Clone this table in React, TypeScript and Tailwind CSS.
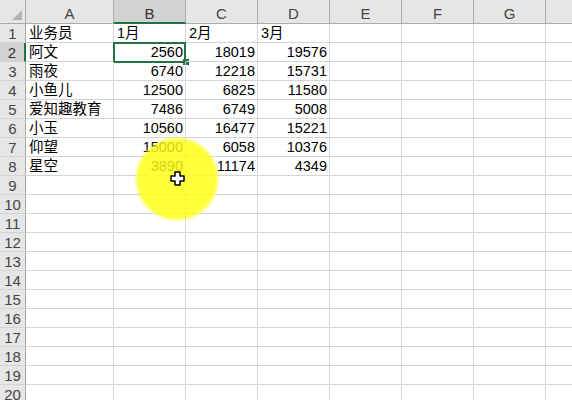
import React from "react"

const COLS = ["A", "B", "C", "D", "E", "F", "G", ""]
const WIDTHS = ["w-[88px]", "w-[72px]", "w-[72px]", "w-[72px]", "w-[72px]", "w-[72px]", "w-[72px]", "w-[72px]"]

type Row = [string, string, string, string] | null

const DATA: Row[] = [
  ["业务员", "1月", "2月", "3月"],
  ["阿文", "2560", "18019", "19576"],
  ["雨夜", "6740", "12218", "15731"],
  ["小鱼儿", "12500", "6825", "11580"],
  ["爱知趣教育", "7486", "6749", "5008"],
  ["小玉", "10560", "16477", "15221"],
  ["仰望", "15000", "6058", "10376"],
  ["星空", "3890", "11174", "4349"],
]

function Cell({ ci, ri, value }: { ci: number; ri: number; value?: string }) {
  const isNum = ri > 0 && ci > 0
  const selected = ri === 1 && ci === 1
  return (
    <div
      className={`relative h-[19px] shrink-0 border-r border-b border-[#d4d4d4] ${WIDTHS[ci]} ${isNum ? "text-right pr-[2px]" : "text-left pl-[3px]"} leading-[19px] text-[14.5px] text-black whitespace-nowrap`}
    >
      {value}
      {selected && (
        <>
          <div className="absolute -left-[1px] -top-[1px] h-[21px] w-[73px] border-2 border-[#217346]" />
          <div className="absolute -right-[4px] -bottom-[4px] h-[6px] w-[6px] bg-[#217346]" />
        </>
      )}
    </div>
  )
}

export default function App() {
  const rows = Array.from({ length: 20 }, (_, i) => i)
  return (
    <div className="relative h-[400px] w-[572px] overflow-hidden bg-white font-['Liberation_Sans','Noto_Sans_CJK_SC',sans-serif]">
      {/* column headers */}
      <div className="flex h-[24px]">
        <div className="relative h-[24px] w-[26px] shrink-0 border-r border-b border-[#ababab] bg-[#e6e6e6]">
          <svg className="absolute right-[3px] bottom-[3px]" width="10" height="10" viewBox="0 0 10 10">
            <polygon points="10,0 10,10 0,10" fill="#b4b4b4" />
          </svg>
        </div>
        {COLS.map((c, ci) => (
          <div
            key={ci}
            className={`h-[24px] shrink-0 ${WIDTHS[ci]} border-r pt-[4px] text-center text-[15px] leading-[19px] ${ci === 1 ? "border-b-2 border-b-[#217346] border-r-[#ababab] bg-[#d2d2d2] text-[#333]" : "border-b border-[#ababab] bg-[#e6e6e6] text-[#444]"}`}
          >
            {c}
          </div>
        ))}
      </div>

      {rows.map((ri) => {
        const row = DATA[ri] ?? null
        return (
          <div key={ri} className="flex h-[19px]">
            <div
              className={`h-[19px] w-[26px] shrink-0 border-b border-[#d4d4d4] text-center text-[15px] leading-[19px] ${ri === 1 ? "border-r-2 border-r-[#217346] bg-[#d2d2d2] text-[#333]" : "border-r border-r-[#ababab] bg-[#e6e6e6] text-[#444]"}`}
            >
              {ri + 1}
            </div>
            {COLS.map((c, ci) => (
              <Cell key={ci} ci={ci} ri={ri} value={row && ci < 4 ? row[ci] : undefined} />
            ))}
          </div>
        )
      })}

      {/* cursor highlight */}
      <div className="pointer-events-none absolute left-[136px] top-[138px] h-[82px] w-[82px] rounded-full bg-[#ffff10] opacity-[0.82] blur-[1.5px]" />
      <svg className="pointer-events-none absolute left-[170px] top-[171px]" width="15" height="15" viewBox="0 0 15 15">
        <path
          d="M5 1h5v4h4v5h-4v4H5v-4H1V5h4z"
          fill="#fff"
          stroke="#000"
          strokeWidth="1.5"
          strokeLinejoin="round"
        />
      </svg>
    </div>
  )
}
